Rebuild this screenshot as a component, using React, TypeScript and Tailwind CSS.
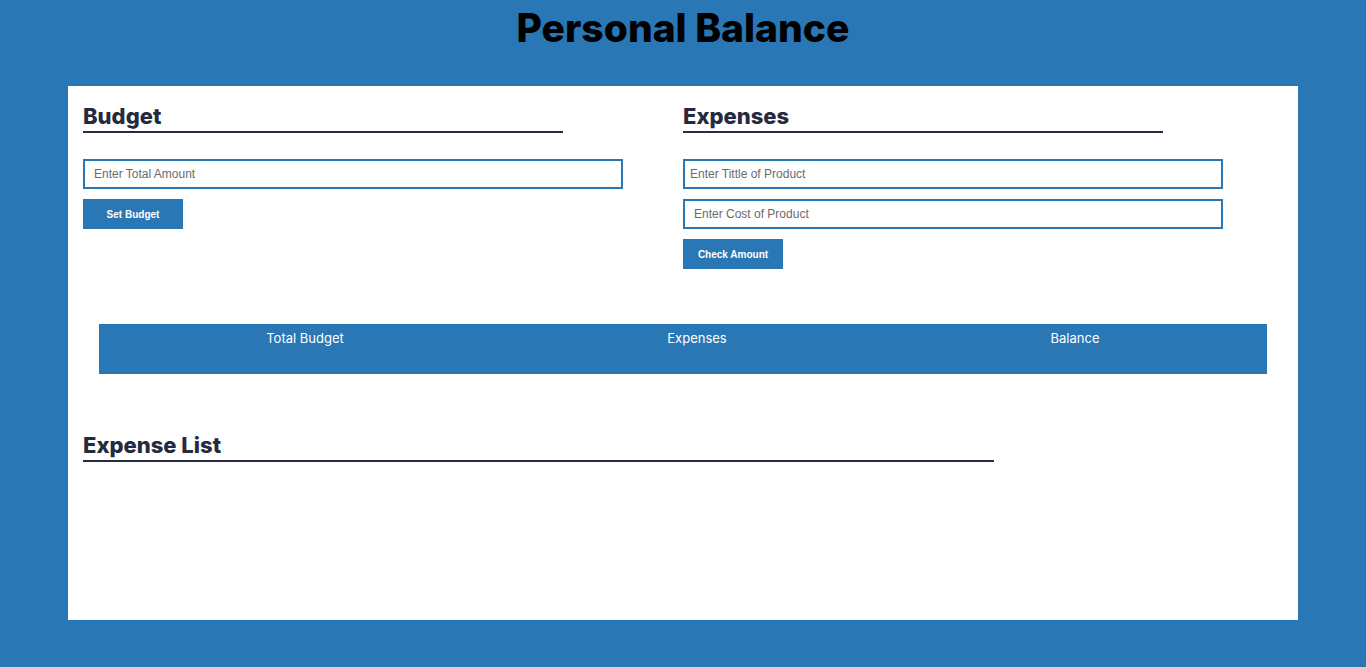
const Heading = ({ children, width }: { children: React.ReactNode; width: string }) => (
  <h2
    className={`${width} border-b-2 border-[#272c44] pb-[1px] text-[22px] leading-[28px] font-extrabold text-[#262a40]`}
    style={{ fontFamily: "Inter, 'Open Sans', sans-serif" }}
  >
    {children}
  </h2>
);

const Field = ({ placeholder, pl = "pl-[9px]" }: { placeholder: string; pl?: string }) => (
  <input
    type="text"
    placeholder={placeholder}
    className={`block h-[30px] w-[540px] border-2 border-[#2977b5] bg-white ${pl} text-[12px] text-[#333] outline-none placeholder:text-[#6b6b6b]`}
    style={{ fontFamily: "'Liberation Sans', Arial, sans-serif" }}
  />
);

const Button = ({ children }: { children: React.ReactNode }) => (
  <button
    className="h-[30px] w-[100px] bg-[#2977b5] text-[10px] font-bold text-white"
    style={{ fontFamily: "'Liberation Sans', Arial, sans-serif" }}
  >
    {children}
  </button>
);

export default function App() {
  return (
    <div className="min-h-[667px] bg-[#2977b5] px-[68px] pb-[47px]">
      <header className="flex h-[86px] justify-center pt-[4px]">
        <h1
          className="text-[39px] leading-[48px] font-extrabold text-black"
          style={{ fontFamily: "Inter, 'Open Sans', sans-serif" }}
        >
          Personal Balance
        </h1>
      </header>

      <main className="h-[534px] bg-white px-[15px] pt-[16px]">
        <div className="grid grid-cols-2">
          <section>
            <Heading width="w-[480px]">Budget</Heading>
            <div className="mt-[26px] flex flex-col gap-[10px]">
              <Field placeholder="Enter Total Amount" />
              <Button>Set Budget</Button>
            </div>
          </section>
          <section>
            <Heading width="w-[480px]">Expenses</Heading>
            <div className="mt-[26px] flex flex-col gap-[10px]">
              <Field placeholder="Enter Tittle of Product" pl="pl-[5px]" />
              <Field placeholder="Enter Cost of Product" />
              <Button>Check Amount</Button>
            </div>
          </section>
        </div>

        <div
          className="mx-[16px] mt-[55px] grid h-[50px] grid-cols-[412px_372px_384px] bg-[#2977b5] pt-[6px] text-center text-[13px] leading-[16px] text-white"
          style={{ fontFamily: "Inter, 'Open Sans', sans-serif" }}
        >
          <div>Total Budget</div>
          <div>Expenses</div>
          <div>Balance</div>
        </div>

        <section className="mt-[57px]">
          <Heading width="w-[911px]">Expense List</Heading>
        </section>
      </main>
    </div>
  );
}
